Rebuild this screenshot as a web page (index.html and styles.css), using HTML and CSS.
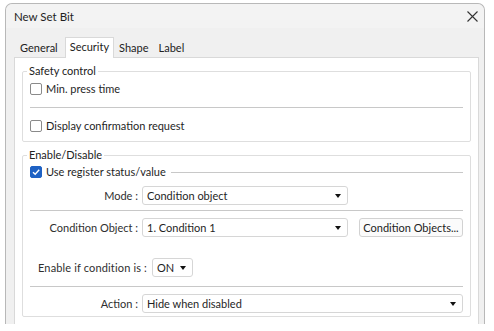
FILE: index.html
```html
<!DOCTYPE html>
<html>
<head>
    <title>New Set Bit</title>
    <link rel="stylesheet" href="styles.css">
</head>
<body>
    <div class="window">
        <div class="titlebar">
            <span class="title">New Set Bit</span>
            <svg class="close" width="11" height="11" viewBox="0 0 11 11">
                <path d="M0.5 0.5 L10.5 10.5 M10.5 0.5 L0.5 10.5" stroke="#333" stroke-width="1.1" fill="none"/>
            </svg>
        </div>

        <div class="tabs">
            <div class="tab">General</div>
            <div class="tab active">Security</div>
            <div class="tab">Shape</div>
            <div class="tab">Label</div>
        </div>

        <div class="panel">
            <fieldset class="group safety">
                <legend>Safety control</legend>
                <label class="check"><span class="box"></span>Min. press time</label>
                <div class="sep"></div>
                <label class="check"><span class="box"></span>Display confirmation request</label>
            </fieldset>

            <fieldset class="group enable">
                <legend>Enable/Disable</legend>
                <div class="check-line">
                    <label class="check">
                        <span class="box checked">
                            <svg width="10" height="10" viewBox="0 0 10 10"><path d="M2 5.2 L4.2 7.3 L8.2 2.8" stroke="#fff" stroke-width="1.4" fill="none"/></svg>
                        </span>Use register status/value
                    </label>
                    <div class="line"></div>
                </div>

                <div class="row first">
                    <span class="lbl">Mode :</span>
                    <div class="select w-206">Condition object<span class="arrow"></span></div>
                </div>

                <div class="sep sep-a"></div>

                <div class="row">
                    <span class="lbl">Condition Object :</span>
                    <div class="select w-206">1. Condition 1<span class="arrow"></span></div>
                    <button class="btn">Condition Objects...</button>
                </div>

                <div class="row cond">
                    <span class="cond-lbl">Enable if condition is :</span>
                    <div class="select w-41">ON<span class="arrow"></span></div>
                </div>

                <div class="sep sep-b"></div>

                <div class="row">
                    <span class="lbl">Action :</span>
                    <div class="select grow">Hide when disabled<span class="arrow"></span></div>
                </div>
            </fieldset>
        </div>
    </div>
</body>
</html>
```

FILE: styles.css
```css
* {
    box-sizing: border-box;
}
body {
    margin: 0;
    background-color: #fff;
    font-family: Lato, "Noto Sans", sans-serif;
    font-size: 11px;
    color: #1f1f1f;
}
.window {
    margin: 3px 0 0 5px;
    width: 480px;
    height: 321px;
    border: 1px solid #b8b8b8;
    border-bottom: none;
    border-radius: 7px 7px 0 0;
    background-color: #f0f0f0;
    display: flex;
    flex-direction: column;
}
.titlebar {
    height: 24px;
    display: flex;
    align-items: center;
    justify-content: space-between;
    padding: 0 6px 0 8px;
    background-color: #f3f3f3;
    border-radius: 7px 7px 0 0;
}
.title {
    font-size: 11.5px;
}
.tabs {
    height: 29px;
    display: flex;
    align-items: flex-end;
    padding-left: 8px;
}
.tab {
    height: 17px;
    line-height: 16px;
    padding: 0 5px;
    color: #222;
}
.tab:first-child {
    padding: 0 7px 0 6px;
}
.tab.active {
    height: 21px;
    line-height: 17px;
    padding: 0 4px;
    margin-bottom: -1px;
    background-color: #fff;
    border: 1px solid #d9d9d9;
    border-bottom: none;
    position: relative;
    z-index: 1;
}
.panel {
    flex: 1;
    margin: 0 5px 0 8px;
    padding: 5px 7px 0 7px;
    background-color: #fff;
    border: 1px solid #d9d9d9;
    border-bottom: none;
}
.group {
    margin: 0;
    border: 1px solid #dedede;
    border-radius: 2px;
    padding: 1px 7px 6px 7px;
}
.group legend {
    padding: 0 2px;
    margin-left: -3px;
    line-height: 16px;
    color: #222;
}
.enable {
    margin-top: 5px;
    padding: 0 7px 3px 7px;
}
.check {
    display: flex;
    align-items: center;
    height: 18px;
    line-height: 18px;
}
.box {
    width: 12px;
    height: 12px;
    border: 1px solid #8a8a8a;
    border-radius: 2px;
    margin-right: 4px;
    display: flex;
    align-items: center;
    justify-content: center;
}
.box.checked {
    background-color: #1f62c4;
    border-color: #1f62c4;
}
.sep {
    height: 1px;
    background-color: #c8c8c8;
    margin: 9px 0;
}
.sep-a {
    margin: 5px 0 7px 0;
}
.sep-b {
    margin: 9px 0 7px 0;
}
.check-line {
    display: flex;
    align-items: center;
}
.check-line .line {
    flex: 1;
    height: 1px;
    background-color: #c8c8c8;
    margin-left: 5px;
}
.row {
    display: flex;
    align-items: center;
    height: 19px;
}
.row.first {
    margin-top: 5px;
}
.row.cond {
    margin-top: 21px;
    padding-left: 8px;
}
.lbl {
    width: 108px;
    text-align: right;
    margin-right: 4px;
    color: #2f2f2f;
}
.cond-lbl {
    margin-right: 5px;
    letter-spacing: 0.15px;
    color: #2f2f2f;
}
.select {
    height: 19px;
    display: flex;
    align-items: center;
    justify-content: space-between;
    padding: 0 6px 0 4px;
    border: 1px solid #d6d6d6;
    border-radius: 3px;
    background-color: #fff;
}
.w-206 {
    width: 206px;
}
.w-41 {
    width: 41px;
}
.grow {
    flex: 1;
}
.arrow {
    width: 0;
    height: 0;
    border-left: 3.5px solid transparent;
    border-right: 3.5px solid transparent;
    border-top: 4px solid #111;
}
.btn {
    margin-left: 11px;
    width: 104px;
    height: 19px;
    padding: 0;
    white-space: nowrap;
    font-family: inherit;
    font-size: 11px;
    color: #222;
    background-color: #fbfbfb;
    border: 1px solid #d2d2d2;
    border-radius: 3px;
}
```
